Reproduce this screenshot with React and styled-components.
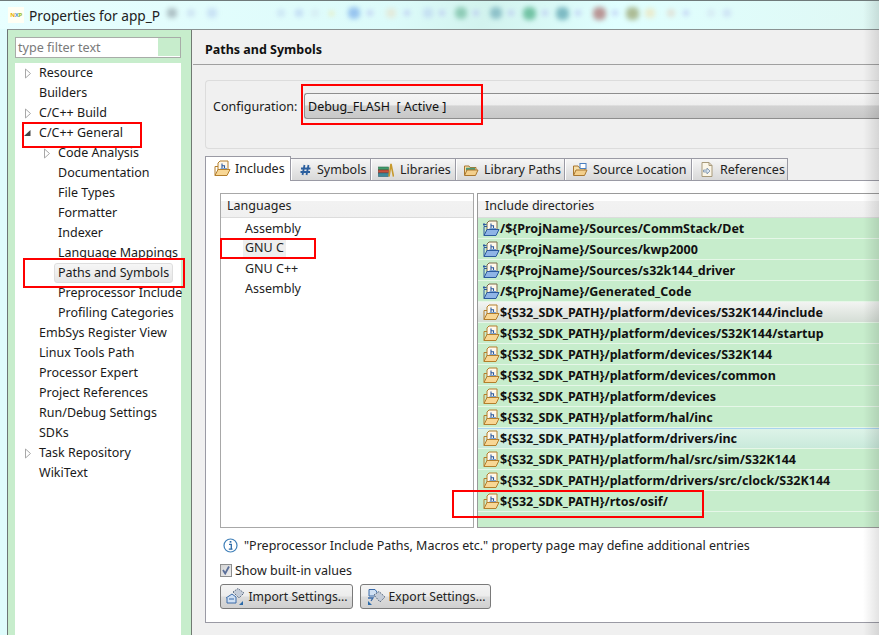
import React from 'react';
import styled, { createGlobalStyle } from 'styled-components';

const Global = createGlobalStyle`
  html, body { margin: 0; padding: 0; background: #f0f0f0; }
  * { box-sizing: border-box; }
  #root { width: 879px; height: 635px; overflow: hidden; }
`;

const Window = styled.div`
  position: relative; width: 879px; height: 635px; overflow: hidden;
  display: flex; flex-direction: column;
  font-family: "Noto Sans", "Open Sans", sans-serif; font-size: 12.5px; color: #1a1a1a;
  background: #dffcfc; border-top: 1px solid #6f7a7a;
`;
const TitleBar = styled.div`
  height: 28px; flex: none; display: flex; align-items: center; padding-left: 8px;
  background: linear-gradient(100deg, #e8ffff 0%, #dcfbfa 45%, #d2f3ee 55%, #e0ffff 70%, #dff8f4 100%);
`;
const NxpLogo = styled.span`
  width: 16px; height: 16px; background: #fffff4; display: flex; align-items: center; justify-content: center;
  font-size: 6px; font-weight: 700; letter-spacing: -.3px; line-height: 1;
`;
const LogoLetter = styled.span`color: ${p => p.$c};`;
const TitleText = styled.span`margin-left: 5px; font-size: 13.7px; color: #222; width: 138px; white-space: nowrap;`;
const BlurStrip = styled.div`display: flex; align-items: center; filter: blur(2.5px); opacity: .6; margin-top: -4px;`;
const Blob = styled.span`
  width: ${p => p.$s}px; height: ${p => p.$s}px; margin-left: ${p => p.$m}px; border-radius: 40%;
  background: ${p => p.$c}; flex: none;
`;
const Main = styled.div`
  flex: 1; min-height: 0; display: flex; margin-left: 7px;
  border-left: 1px solid #6d7575; border-top: 1px solid #8a9292; background: #f0f0f0;
`;
const Sidebar = styled.aside`
  width: 184px; flex: none; background: #c7edcc; border-right: 1px solid #707a72;
  padding: 7px 10px 0 7px; display: flex; flex-direction: column; gap: 5px;
`;
const Filter = styled.div`
  height: 21px; flex: none; border: 1px solid #a8aca8; background: #fff;
  display: flex; align-items: center; justify-content: space-between; padding: 0 0 1px 2px;
  color: #7a7a7a; font-size: 12.6px;
`;
const FilterPatch = styled.span`width: 22px; height: 100%; background: #c7edcc;`;
const Tree = styled.div`flex: 1; background: #fff; display: flex; flex-direction: column;`;
const TreeRow = styled.div`
  height: 20px; flex: none; display: flex; align-items: center; white-space: nowrap;
  padding: 0 0 2px ${p => p.$level * 19 + 24}px; position: relative;
`;
const Twisty = styled.svg`position: absolute; left: ${p => p.$level * 19 + 9}px; top: 5px;`;
const Selected = styled.span`
  margin: 2px 0 0 -4px; padding: 0 3px; height: 20px; line-height: 17px; border: 1px solid #dedede; border-radius: 3px;
  background: linear-gradient(#f6f6f6, #e6e6e6);
`;
const Content = styled.main`flex: 1; min-width: 0; display: flex; flex-direction: column; padding-left: 1px;`;
const PageHeader = styled.header`
  height: 35px; flex: none; display: flex; align-items: center; padding: 4px 0 0 12px;
  font-weight: 700; font-size: 12.5px; color: #111; border-bottom: 1px solid #a0a0a0;
`;
const ConfigGroup = styled.section`
  margin: 15px 0 0 12px; height: 69px; flex: none; border: 1px solid #dcdcdc; border-radius: 4px 0 0 4px;
  border-right: 0; display: flex; padding: 12px 0 0 7px;
`;
const ConfigLabel = styled.label`width: 91px; flex: none; height: 25px; padding-top: 2px; display: flex; align-items: center;`;
const Combo = styled.div`
  flex: 1; height: 26px; display: flex; align-items: center; padding: 1px 0 0 3px; color: #111; white-space: pre;
  border: 1px solid #8e8e8e; border-right: 0; border-radius: 3px 0 0 3px;
  background: linear-gradient(#f5f5f5 0%, #eeeeee 45%, #d2d2d2 50%, #c8c8c8 100%);
`;
const TabStrip = styled.div`
  margin: 7px 0 0 12px; height: 25px; flex: none; display: flex; align-items: flex-end; position: relative; z-index: 1;
`;
const Tab = styled.div`
  width: ${p => p.$w}px; flex: none; height: ${p => (p.$active ? 25 : 23)}px; display: flex; align-items: center; gap: ${p => p.$gap ?? 5}px;
  padding: ${p => (p.$active ? '0 0 2px 8px' : '0 0 0 7px')}; white-space: nowrap; color: #222;
  border: 1px solid #9a9aa4; border-left-width: ${p => (p.$active ? 1 : 0)}px; border-bottom: ${p => (p.$active ? '0' : '1px solid #9a9aa4')};
  background: ${p => (p.$active ? '#fff' : 'linear-gradient(#f6f6f6, #d8d8d8)')};
  box-shadow: ${p => (p.$active ? 'none' : 'inset 1px 0 0 #fff')};
`;
const TabBody = styled.div`
  margin: -1px 0 0 12px; height: 443px; flex: none; background: #fff;
  border: 1px solid #9a9aa4; border-right: 0; padding: 12px 0 0 14px; display: flex; flex-direction: column;
`;
const Panes = styled.div`display: flex; gap: 3px; height: 335px; flex: none;`;
const LangPane = styled.div`width: 254px; flex: none; border: 1px solid #a8a8a8; display: flex; flex-direction: column;`;
const IncPane = styled.div`
  flex: 1; min-width: 0; border: 1px solid #9a9a9a; border-right: 0; background: #c7edcc; display: flex; flex-direction: column;
`;
const ColHead = styled.div`
  height: 24px; flex: none; display: flex; align-items: center; padding-left: ${p => p.$pad}px; color: #222;
  background: linear-gradient(#fff 0%, #fff 30%, #f2f2f2 32%, #f0f0f0 100%); border-bottom: 1px solid #dcdcdc;
`;
const LangRow = styled.div`height: 20px; flex: none; display: flex; align-items: center; padding-left: 24px; color: #222;`;
const LangSelected = styled.span`
  margin-left: -2px; padding: 0 2px 2px; height: 19px; display: flex; align-items: center; background: #eeeeee;
`;
const rowFills = {
  gray: 'linear-gradient(#f2f4f2, #d4ddd5)',
  blue: 'linear-gradient(#a9d3ee 0, #a9d3ee 1px, #ddf3e8 1px, #c9eadb 100%)',
  none: 'transparent',
};
const IncRow = styled.div`
  height: 21px; flex: none; display: flex; align-items: center; padding-left: 5px;
  font-weight: 700; color: #111; white-space: nowrap; border-bottom: 1px solid #e6f7e8;
  background: ${p => rowFills[p.$fill || 'none']};
`;
const InfoRow = styled.div`display: flex; align-items: center; gap: 6px; height: 18px; margin-top: 8px; padding-left: 3px; color: #222;`;
const CheckRow = styled.label`display: flex; align-items: center; gap: 3px; height: 18px; margin-top: 7px; color: #222;`;
const CheckBox = styled.span`
  width: 12px; height: 13px; border: 1px solid #8e8f8f; background: linear-gradient(135deg, #d4d4d4, #eeeeee);
  display: flex; align-items: center; justify-content: center;
`;
const ButtonRow = styled.div`display: flex; gap: 7px; margin-top: 5px;`;
const Button = styled.button`
  width: ${p => p.$w}px; height: 25px; display: flex; align-items: center; justify-content: center; gap: 3px; padding: 0;
  font-family: inherit; font-size: 12.2px; color: #222; border: 1px solid #7a7a7a; border-radius: 3px;
  background: linear-gradient(#f4f4f4 0%, #ececec 48%, #dcdcdc 52%, #d0d0d0 100%);
`;
const EdgeShade = styled.div`
  position: absolute; right: 0; top: 0; bottom: 0; width: 16px; pointer-events: none;
  background: linear-gradient(90deg, rgba(0,0,0,0), rgba(0,0,0,.11));
`;
const Mark = styled.div`
  position: absolute; left: ${p => p.$x}px; top: ${p => p.$y}px; width: ${p => p.$w}px; height: ${p => p.$h}px;
  border: 2px solid #f00; pointer-events: none;
`;

const Hollow = ({ level }) => (
  <Twisty $level={level} width="8" height="11" viewBox="0 0 8 11"><path d="M1.5 1 L6.5 5.5 L1.5 10 Z" fill="#fff" stroke="#a8a8a8" /></Twisty>
);
const Filled = ({ level }) => (
  <Twisty $level={level} width="8" height="11" viewBox="0 0 8 11"><path d="M0 8 L6.5 8 L6.5 2 Z" fill="#444" /></Twisty>
);

const IncludeIcon = ({ blue }) => {
  const fill = blue ? '#8fb4e6' : '#f8d795';
  const stroke = blue ? '#2c5a9e' : '#b47f2c';
  return (
    <svg width="17" height="17" viewBox="0 0 17 17" style={{ flex: 'none' }}>
      <path d="M4 12 V3 L6 1 H14 V10" fill="#fff8ea" stroke={blue ? '#7d6a4a' : '#b47f2c'} />
      <path d="M8 3.5 V8 M8 5.7 H10.5 V8" fill="none" stroke="#2c5aa0" strokeWidth="1.1" />
      <path d="M6.5 8.5 H13" stroke="#7aa0d0" />
      <path d="M1 15.5 L4 9.5 H16 L13 15.5 Z" fill={fill} stroke={stroke} />
      <path d="M1 15.5 V6.5 H4" fill="none" stroke={stroke} />
      {blue && <path d="M0 4.5 H3.5 M1.5 3 L0 4.5 L1.5 6" fill="none" stroke="#2c5a9e" />}
    </svg>
  );
};
const HashIcon = () => (
  <svg width="16" height="16" viewBox="0 0 16 16" style={{ flex: 'none' }}>
    <path d="M6.5 3 L4.5 13 M10.5 3 L8.5 13 M3 6.5 H12.5 M2.5 10 H12" stroke="#2b5f9e" strokeWidth="1.8" fill="none" />
  </svg>
);
const BooksIcon = () => (
  <svg width="16" height="16" viewBox="0 0 16 16" style={{ flex: 'none' }}>
    <rect x="0.5" y="5" width="10" height="3" fill="#3f9a6b" stroke="#2a6f4a" strokeWidth=".6" />
    <rect x="0.5" y="8" width="10" height="3" fill="#c8523c" stroke="#8a3020" strokeWidth=".6" />
    <rect x="0.5" y="11" width="10" height="3.5" fill="#3f8a9a" stroke="#2a5f6f" strokeWidth=".6" />
    <path d="M11 14.5 L13 2 L15.5 14.5" fill="none" stroke="#c79a2e" strokeWidth="1.6" />
  </svg>
);
const FolderIcon = ({ src }) => (
  <svg width="16" height="16" viewBox="0 0 16 16" style={{ flex: 'none' }}>
    <path d="M1.5 13 V4 H6 L7 5.5 H13 V8" fill="#f6dfa8" stroke="#a9772f" />
    {src && <rect x="8" y="1.5" width="6" height="5" fill="#fff" stroke="#4a7fc0" />}
    {!src && <path d="M3 6.5 H12 M3 8 H12" stroke="#4c9a78" strokeWidth="1.5" />}
    <path d="M1.5 13.5 L4 8 H15 L12.5 13.5 Z" fill="#f3cf8c" stroke="#a9772f" />
  </svg>
);
const RefIcon = () => (
  <svg width="16" height="17" viewBox="0 0 16 17" style={{ flex: 'none' }}>
    <path d="M3 1.5 H10 L13 4.5 V15.5 H3 Z" fill="#fbf6e8" stroke="#a89a7a" />
    <path d="M10 1.5 V4.5 H13" fill="none" stroke="#a89a7a" />
    <path d="M4.5 9 H8 V7 L11 10 L8 13 V11 H4.5 Z" fill="#d8e4f0" stroke="#7a8fa8" strokeWidth=".8" />
  </svg>
);
const InfoIcon = () => (
  <svg width="15" height="15" viewBox="0 0 15 15" style={{ flex: 'none' }}>
    <circle cx="7.5" cy="7.5" r="6.5" fill="#fff" stroke="#3f7fb8" strokeWidth="1.2" />
    <rect x="6.7" y="3" width="1.7" height="1.7" fill="#2c6aa8" />
    <path d="M6 6.3 H8.3 V11 M5.8 11.2 H9.5" fill="none" stroke="#2c6aa8" strokeWidth="1.3" />
  </svg>
);
const ImportIcon = () => (
  <svg width="20" height="18" viewBox="0 0 20 18" style={{ flex: 'none' }}>
    <path d="M1 10 L7 6 L11 9 V15 H2 V10" fill="#cfe0f4" stroke="#3a6aa8" />
    <path d="M8 4 L13 0.5 L19 5 L14 10 Z" fill="#c4ccd8" stroke="#5a6a80" strokeDasharray="1.5 1" />
    <path d="M4 11 H9" stroke="#3a6aa8" />
    <path d="M18 13 V17 H14 Z" fill="#2c6aa8" />
  </svg>
);
const ExportIcon = () => (
  <svg width="20" height="18" viewBox="0 0 20 18" style={{ flex: 'none' }}>
    <path d="M3 1.5 H9 L11 4 V8 H3 Z" fill="#cfe0f4" stroke="#3a6aa8" />
    <path d="M8 7 L13 3.5 L19 9 L14 14 Z" fill="#c4ccd8" stroke="#5a6a80" strokeDasharray="1.5 1" />
    <path d="M2 10 L7 10 L5 13" fill="none" stroke="#3a6aa8" strokeWidth="1.3" />
    <path d="M2 13 V17 H6 Z" fill="#2c6aa8" />
  </svg>
);

const tree = [
  ['Resource', 0, 'hollow'], ['Builders', 0], ['C/C++ Build', 0, 'hollow'], ['C/C++ General', 0, 'filled'],
  ['Code Analysis', 1, 'hollow'], ['Documentation', 1], ['File Types', 1], ['Formatter', 1], ['Indexer', 1],
  ['Language Mappings', 1], ['Paths and Symbols', 1, null, true], ['Preprocessor Include', 1], ['Profiling Categories', 1],
  ['EmbSys Register View', 0], ['Linux Tools Path', 0], ['Processor Expert', 0], ['Project References', 0],
  ['Run/Debug Settings', 0], ['SDKs', 0], ['Task Repository', 0, 'hollow'], ['WikiText', 0],
];
const includes = [
  ['/${ProjName}/Sources/CommStack/Det', true], ['/${ProjName}/Sources/kwp2000', true],
  ['/${ProjName}/Sources/s32k144_driver', true], ['/${ProjName}/Generated_Code', true],
  ['${S32_SDK_PATH}/platform/devices/S32K144/include', false, 'gray'], ['${S32_SDK_PATH}/platform/devices/S32K144/startup'],
  ['${S32_SDK_PATH}/platform/devices/S32K144'], ['${S32_SDK_PATH}/platform/devices/common'],
  ['${S32_SDK_PATH}/platform/devices'], ['${S32_SDK_PATH}/platform/hal/inc'],
  ['${S32_SDK_PATH}/platform/drivers/inc', false, 'blue'], ['${S32_SDK_PATH}/platform/hal/src/sim/S32K144'],
  ['${S32_SDK_PATH}/platform/drivers/src/clock/S32K144'], ['${S32_SDK_PATH}/rtos/osif/'],
];
const blobs = [
  [0, '#8a98a0', 10], [10, '#c0d4ec', 8], [12, '#b8d0f0', 10], [60, '#c0d8f0', 8], [10, '#b0c8f0', 8], [8, '#d0e4f0', 8],
  [10, '#f0e090', 5], [14, '#6aa0e8', 12], [7, '#b0b8f0', 6], [13, '#e8e0c8', 10], [8, '#b0b8f0', 6],
  [13, '#b8d0f0', 10], [6, '#b0b8f0', 6], [10, '#60b090', 12], [6, '#b0b8f0', 6], [11, '#60a0b0', 12], [6, '#b0b8f0', 6],
  [9, '#30a070', 13], [6, '#b0b8f0', 6], [8, '#4090a0', 13], [6, '#b0b8f0', 6], [12, '#a05050', 13], [6, '#b0b8f0', 6],
  [8, '#8a9050', 13], [6, '#f0e0b0', 10], [12, '#e0d0c0', 8], [8, '#b0b8f0', 6], [18, '#d0e0f0', 8], [8, '#c0d0f0', 8],
];

export default function App() {
  return (
    <Window>
      <Global />
      <TitleBar>
        <NxpLogo>
          <LogoLetter $c="#e8b000">N</LogoLetter><LogoLetter $c="#5a9ad0">X</LogoLetter><LogoLetter $c="#9ac020">P</LogoLetter>
        </NxpLogo>
        <TitleText>Properties for app_P</TitleText>
        <BlurStrip>
          {blobs.map(([m, c, s], i) => <Blob key={i} $m={m} $c={c} $s={s} />)}
        </BlurStrip>
      </TitleBar>
      <Main>
        <Sidebar>
          <Filter>type filter text<FilterPatch /></Filter>
          <Tree>
            {tree.map(([label, level, tw, sel]) => (
              <TreeRow key={label} $level={level}>
                {tw === 'hollow' && <Hollow level={level} />}
                {tw === 'filled' && <Filled level={level} />}
                {sel ? <Selected>{label}</Selected> : label}
              </TreeRow>
            ))}
          </Tree>
        </Sidebar>
        <Content>
          <PageHeader>Paths and Symbols</PageHeader>
          <ConfigGroup>
            <ConfigLabel>Configuration:</ConfigLabel>
            <Combo>{'Debug_FLASH  [ Active ]'}</Combo>
          </ConfigGroup>
          <TabStrip>
            <Tab $active $w={86} $gap={4}><IncludeIcon />Includes</Tab>
            <Tab $w={80} $gap={3}><HashIcon />Symbols</Tab>
            <Tab $w={85} $gap={6}><BooksIcon />Libraries</Tab>
            <Tab $w={109}><FolderIcon />Library Paths</Tab>
            <Tab $w={127}><FolderIcon src />Source Location</Tab>
            <Tab $w={96} $gap={5}><RefIcon />References</Tab>
          </TabStrip>
          <TabBody>
            <Panes>
              <LangPane>
                <ColHead $pad={6}>Languages</ColHead>
                <LangRow>Assembly</LangRow>
                <LangRow><LangSelected>GNU C</LangSelected></LangRow>
                <LangRow>GNU C++</LangRow>
                <LangRow>Assembly</LangRow>
              </LangPane>
              <IncPane>
                <ColHead $pad={7}>Include directories</ColHead>
                {includes.map(([p, blue, fill]) => (
                  <IncRow key={p} $fill={fill}><IncludeIcon blue={blue} />{p}</IncRow>
                ))}
              </IncPane>
            </Panes>
            <InfoRow><InfoIcon />"Preprocessor Include Paths, Macros etc." property page may define additional entries</InfoRow>
            <CheckRow>
              <CheckBox>
                <svg width="10" height="10" viewBox="0 0 10 10"><path d="M2 5 L4.2 8.5 L8 1.5" fill="none" stroke="#5a6f9a" strokeWidth="1.8" /></svg>
              </CheckBox>
              Show built-in values
            </CheckRow>
            <ButtonRow>
              <Button $w={133}><ImportIcon />Import Settings...</Button>
              <Button $w={131}><ExportIcon />Export Settings...</Button>
            </ButtonRow>
          </TabBody>
        </Content>
      </Main>
      <EdgeShade />
      <Mark $x={22} $y={121} $w={120} $h={26} />
      <Mark $x={23} $y={257} $w={162} $h={30} />
      <Mark $x={301} $y={83} $w={182} $h={41} />
      <Mark $x={220} $y={237} $w={96} $h={21} />
      <Mark $x={452} $y={489} $w={252} $h={28} />
    </Window>
  );
}
